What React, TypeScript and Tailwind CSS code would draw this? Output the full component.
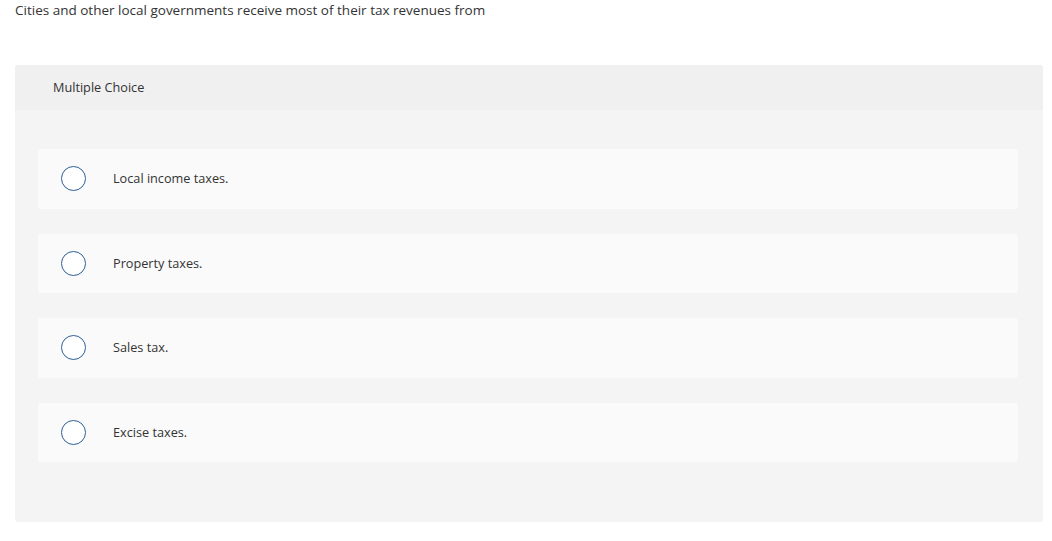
const choices = ['Local income taxes.', 'Property taxes.', 'Sales tax.', 'Excise taxes.'];

export default function App() {
  return (
    <div className="bg-white min-h-[541px] text-[#333] text-[12.7px]" style={{ fontFamily: '"Open Sans", "Liberation Sans", sans-serif' }}>
      <p className="px-[15px] pt-[1px] leading-[18px] text-[13.5px]">Cities and other local governments receive most of their tax revenues from</p>
      <div className="mx-[15px] mt-[46px] w-[1028px] rounded-[3px] bg-[#f4f4f4] overflow-hidden">
        <div className="h-[45px] bg-[#f0f0f0] pl-[38px] flex items-center">Multiple Choice</div>
        <div className="px-[23px] pt-[39px] pb-[60px] flex flex-col gap-[25px]">
          {choices.map((c) => (
            <div key={c} className="h-[59.5px] w-[980px] rounded-[3px] bg-[#fafafa] flex items-center pl-[23px]">
              <span className="w-[25px] h-[25px] rounded-full border-[1.5px] border-[#2c5f94] bg-white shrink-0" />
              <span className="ml-[27px]">{c}</span>
            </div>
          ))}
        </div>
      </div>
    </div>
  );
}
